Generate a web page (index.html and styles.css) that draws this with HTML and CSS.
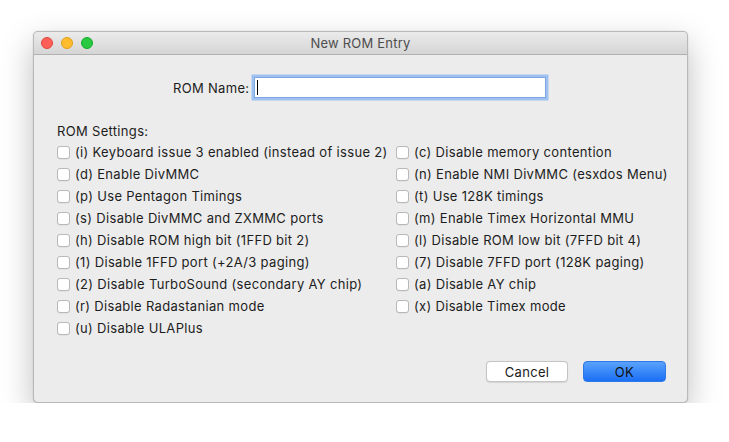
FILE: index.html
```html
<!DOCTYPE html>
<html>
<head>
<meta charset="utf-8">
<link rel="stylesheet" href="styles.css">
</head>
<body>
<div class="window">
  <div class="titlebar">
    <div class="lights">
      <span class="light red"></span>
      <span class="light yellow"></span>
      <span class="light green"></span>
    </div>
    <div class="title">New ROM Entry</div>
  </div>
  <div class="content">
    <div class="name-row">
      <label class="name-label">ROM Name:</label>
      <div class="input"><span class="caret"></span></div>
    </div>
    <div class="settings-label">ROM Settings:</div>
    <div class="grid">
      <div class="col">
        <div class="cb"><span class="box"></span><span>(i) Keyboard issue 3 enabled (instead of issue 2)</span></div>
        <div class="cb"><span class="box"></span><span>(d) Enable DivMMC</span></div>
        <div class="cb"><span class="box"></span><span>(p) Use Pentagon Timings</span></div>
        <div class="cb"><span class="box"></span><span>(s) Disable DivMMC and ZXMMC ports</span></div>
        <div class="cb"><span class="box"></span><span>(h) Disable ROM high bit (1FFD bit 2)</span></div>
        <div class="cb"><span class="box"></span><span>(1) Disable 1FFD port (+2A/3 paging)</span></div>
        <div class="cb"><span class="box"></span><span>(2) Disable TurboSound (secondary AY chip)</span></div>
        <div class="cb"><span class="box"></span><span>(r) Disable Radastanian mode</span></div>
        <div class="cb"><span class="box"></span><span>(u) Disable ULAPlus</span></div>
      </div>
      <div class="col">
        <div class="cb"><span class="box"></span><span>(c) Disable memory contention</span></div>
        <div class="cb"><span class="box"></span><span>(n) Enable NMI DivMMC (esxdos Menu)</span></div>
        <div class="cb"><span class="box"></span><span>(t) Use 128K timings</span></div>
        <div class="cb"><span class="box"></span><span>(m) Enable Timex Horizontal MMU</span></div>
        <div class="cb"><span class="box"></span><span>(l) Disable ROM low bit (7FFD bit 4)</span></div>
        <div class="cb"><span class="box"></span><span>(7) Disable 7FFD port (128K paging)</span></div>
        <div class="cb"><span class="box"></span><span>(a) Disable AY chip</span></div>
        <div class="cb"><span class="box"></span><span>(x) Disable Timex mode</span></div>
      </div>
    </div>
    <div class="buttons">
      <button class="btn cancel">Cancel</button>
      <button class="btn ok">OK</button>
    </div>
  </div>
</div>
</body>
</html>
```
FILE: styles.css
```css
html, body {
  margin: 0;
  padding: 0;
  background: #ffffff;
}
body {
  padding: 31px 0 0 33px;
  font-family: Inter, "Liberation Sans", sans-serif;
  font-size: 13px;
  letter-spacing: 0.32px;
  color: #1d1d1d;
}
.window {
  width: 655px;
  height: 372px;
  box-sizing: border-box;
  background: #ececec;
  border-radius: 5px;
  border: 1px solid #b9b9b9;
  box-shadow: 0 12px 32px rgba(0,0,0,0.26), 0 0 1px rgba(0,0,0,0.3);
  overflow: hidden;
  display: flex;
  flex-direction: column;
}
.titlebar {
  height: 22px;
  background: linear-gradient(#ebebeb, #d5d5d5);
  border-bottom: 1px solid #b1b1b1;
  position: relative;
  display: flex;
  align-items: center;
  justify-content: center;
  flex-shrink: 0;
}
.lights {
  position: absolute;
  left: 7px;
  top: 5px;
  display: flex;
  gap: 8px;
}
.light {
  width: 12px;
  height: 12px;
  border-radius: 50%;
  box-sizing: border-box;
}
.red { background: #fe5f57; border: 0.5px solid #e2463f; }
.yellow { background: #febc2e; border: 0.5px solid #e1a116; }
.green { background: #28c840; border: 0.5px solid #15ad2c; }
.title {
  color: #4d4d4d;
  font-size: 13px;
  letter-spacing: 0.2px;
}
.content {
  flex: 1;
  padding: 0 0 0 23px;
  display: flex;
  flex-direction: column;
}
.name-row {
  display: flex;
  align-items: center;
  margin-top: 22px;
  margin-left: 116px;
}
.name-label {
  margin-right: 5px;
}
.input {
  width: 288px;
  height: 19px;
  background: #fff;
  border: 1px solid #7ea7e0;
  box-shadow: 0 0 0 2.5px #9ec1f1;
  display: flex;
  align-items: center;
  padding-left: 2px;
}
.caret {
  width: 1px;
  height: 15px;
  background: #000;
}
.settings-label {
  margin-top: 24px;
  height: 19px;
  line-height: 19px;
}
.grid {
  display: flex;
}
.col {
  display: flex;
  flex-direction: column;
}
.col:first-child {
  width: 339px;
}
.cb {
  height: 22px;
  display: flex;
  align-items: center;
  white-space: nowrap;
}
.box {
  width: 13px;
  height: 13px;
  box-sizing: border-box;
  border: 1px solid #b8b8b8;
  border-radius: 3px;
  background: #fff;
  margin-right: 5px;
  box-shadow: 0 0.5px 0.5px rgba(0,0,0,0.08);
}
.buttons {
  display: flex;
  justify-content: flex-end;
  gap: 15px;
  margin-top: 22px;
  margin-right: 21px;
}
.btn {
  font-family: inherit;
  font-size: 13px;
  letter-spacing: 0.3px;
  height: 21px;
  border-radius: 4px;
  padding: 0;
  color: #1a1a1a;
}
.cancel {
  width: 82px;
  background: #fff;
  border: 1px solid #c4c4c4;
  box-shadow: 0 0.5px 1px rgba(0,0,0,0.1);
}
.ok {
  width: 83px;
  background: linear-gradient(#5aa2fb, #1a6ff5);
  border: 1px solid #2f79e6;
  color: #111;
}
```
